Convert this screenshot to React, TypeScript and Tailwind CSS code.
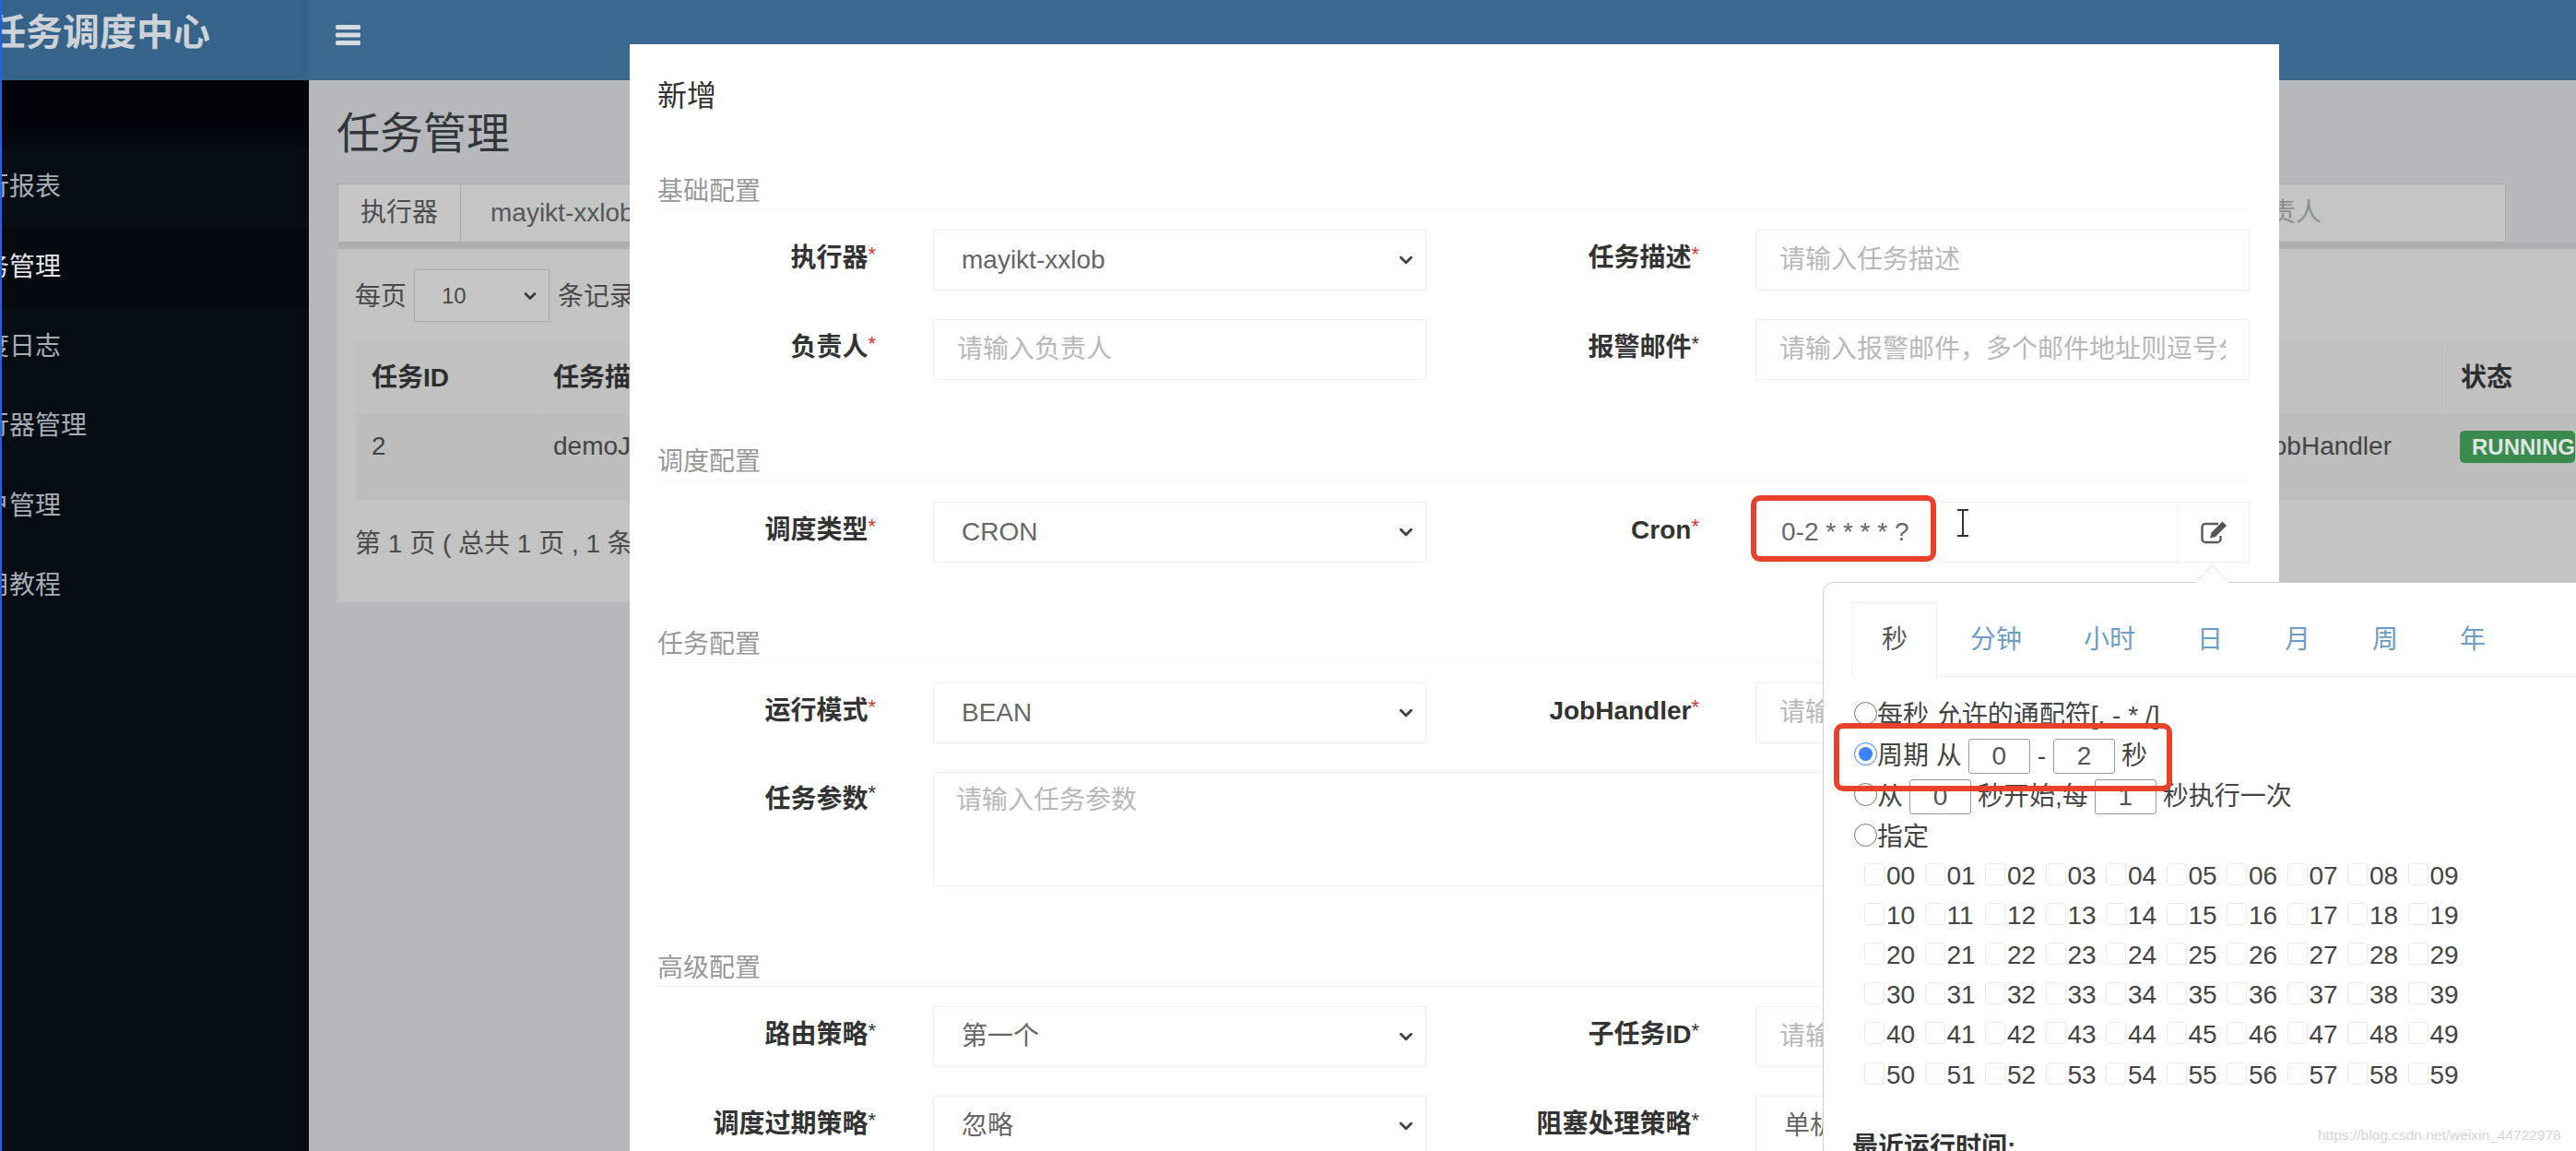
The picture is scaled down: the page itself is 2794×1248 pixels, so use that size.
import React from "react";
import { ChevronDown } from "lucide-react";

const menu = [
  { label: "运行报表" },
  { label: "任务管理", active: true },
  { label: "调度日志" },
  { label: "执行器管理" },
  { label: "用户管理" },
  { label: "使用教程" },
];

const Label = ({ text, red, right }: { text: string; red?: boolean; right?: boolean }) => (
  <div className={`flex items-center justify-end pb-[4px] text-[28px] font-bold text-[#333] ${right ? "pr-[61px]" : "pr-[62px]"}`}>
    {text}
    <span className={`-mt-[10px] text-[22px] font-normal ${red ? "text-[#d9362c]" : "text-[#333]"}`}>*</span>
  </div>
);

const SelectBox = ({ value }: { value: string }) => (
  <div className="flex h-full items-center justify-between rounded-[2px] border border-[#eeeeee] pl-[30px] pr-[10px] text-[28px] text-[#666]">
    {value}
    <ChevronDown size={22} strokeWidth={3.2} className="text-[#444]" />
  </div>
);

const TextInput = ({ placeholder }: { placeholder: string }) => (
  <input
    placeholder={placeholder}
    className="h-full w-full rounded-[2px] border border-[#eeeeee] px-[25px] text-[28px] text-[#666] outline-none placeholder:text-[#b8b8b8]"
  />
);

const Legend = ({ text, className }: { text: string; className: string }) => (
  <div className={`flex h-[42px] items-center border-b border-[#f5f5f5] pt-[3px] text-[28px] text-[#999] ${className}`}>{text}</div>
);

const Row = ({ children, className }: { children: React.ReactNode; className: string }) => (
  <div className={`grid h-[66px] grid-cols-[299px_535px_357px_536px] ${className}`}>{children}</div>
);

const SmallInput = ({ value }: { value: string }) => (
  <input
    defaultValue={value}
    className="h-[38px] w-[67px] rounded-[3px] border border-[#9a9a9a] text-center text-[28px] text-[#555] outline-none"
  />
);

const Radio = ({ checked }: { checked?: boolean }) => (
  <input type="radio" name="second" defaultChecked={checked} className="m-0 mb-[6px] h-[25px] w-[25px] accent-[#3b82f6]" />
);

const tabs = ["秒", "分钟", "小时", "日", "月", "周", "年"];
const seconds = Array.from({ length: 60 }, (_, i) => String(i).padStart(2, "0"));

export default function App() {
  return (
    <div className="relative flex h-[1248px] w-[2794px] overflow-hidden bg-[#b6b8bc] [font-family:'Liberation_Sans','Noto_Sans_CJK_SC',sans-serif]">
      <aside className="flex w-[335px] shrink-0 flex-col overflow-hidden border-l-2 border-[#2460e0] bg-[#070d15]">
        <div className="flex h-[87px] shrink-0 items-center whitespace-nowrap bg-[#36638a] pb-[17px] text-[40px] font-bold text-[#cdd2d7]">
          <span className="-ml-[14px]">任务调度中心</span>
        </div>
        <div className="h-[73px] shrink-0 bg-gradient-to-b from-[#010308] from-60% to-[#060c14]" />
        {menu.map((item) => (
          <div
            key={item.label}
            className={`flex h-[86.4px] shrink-0 items-center whitespace-nowrap text-[28px] ${item.active ? "bg-[#050a11] text-[#e4e6e8]" : "text-[#a7adb3]"}`}
          >
            <span className="-ml-[48px]">{item.label}</span>
          </div>
        ))}
      </aside>

      <main className="min-w-0 flex-1">
        <header className="flex h-[87px] items-center bg-[#3c698f] pb-[12px] pl-[29px]">
          <svg width="27" height="22" viewBox="0 0 27 22" fill="#d5dbe1">
            <rect width="27" height="5" rx="1.5" />
            <rect y="8.5" width="27" height="5" rx="1.5" />
            <rect y="17" width="27" height="5" rx="1.5" />
          </svg>
        </header>
        <div className="pl-[31px]">
          <h1 className="mt-[30px] mb-[26px] h-[56px] -translate-x-px text-[47px] leading-[56px] font-normal text-[#33373b]">任务管理</h1>
          <div className="flex h-[64px] w-[2352px] text-[28px] text-[#55585a]">
            <div className="flex w-[134px] items-center justify-center border border-[#a9abad] bg-[#c6c6c6] text-[#4c4c4c]">执行器</div>
            <div className="flex flex-1 items-center border-y border-r border-[#a9abad] bg-[#c4c5c5] pl-[32px]">mayikt-xxlob</div>
            <div className="flex w-[300px] items-center border-y border-r border-[#a9abad] bg-[#c4c5c5] pl-[16px] text-[#8d8f91]">负责人</div>
          </div>
          <section className="h-[390px] border-t-[7px] border-[#adaeb0] bg-[#c3c3c3] pl-[19px]">
            <div className="flex h-[100px] items-start pt-[22px] text-[28px] text-[#4a4a4a]">
              <span className="mt-[9px]">每页</span>
              <div className="ml-[8px] flex h-[57px] w-[147px] items-center justify-between border border-[#a9a9a9] bg-[#c6c6c6] pl-[29px] pr-[10px] text-[24px]">
                10
                <ChevronDown size={20} strokeWidth={3.2} className="text-[#3a3a3a]" />
              </div>
              <span className="ml-[9px] mt-[9px]">条记录</span>
            </div>
            <div className="flex h-[79px] items-center bg-[#c1c1c1] text-[28px] font-bold text-[#2c2e30]">
              <div className="flex h-full w-[197px] items-center border-r border-[#c9c9c9] pl-[18px]">任务ID</div>
              <div className="flex h-full flex-1 items-center pl-[18px]">任务描述</div>
              <div className="flex h-full w-[143px] items-center border-l border-[#c9c9c9] pl-[17px]">状态</div>
            </div>
            <div className="flex h-[93px] bg-[#bdbdbd] pt-[14px] text-[28px] text-[#424446]">
              <div className="w-[197px] pl-[18px]">2</div>
              <div className="flex-1 pl-[18px]">demoJobHandler</div>
              <div className="whitespace-nowrap pr-[57px]">BEAN：demoJobHandler</div>
              <div className="w-[143px] pl-[17px]">
                <span className="inline-block h-[35px] whitespace-nowrap rounded-[5px] bg-[#3a8a4f] pl-[13px] text-[24px] leading-[35px] font-bold text-[#dfe5e0]">RUNNING</span>
              </div>
            </div>
            <div className="mt-[31px] text-[28px] leading-[34px] text-[#4a4a4a]">第 1 页 ( 总共 1 页 , 1 条记录 )</div>
          </section>
        </div>
      </main>

      {/* modal */}
      <div className="absolute top-[48px] bottom-0 left-[683px] w-[1789px] overflow-hidden bg-white pl-[30px]">
        <div className="mt-[36px] h-[40px] text-[32px] leading-[40px] text-[#333]">新增</div>
        <div className="w-[1727px]">
          <Legend text="基础配置" className="mt-[62px]" />
          <Row className="mt-[21px]">
            <Label text="执行器" red />
            <SelectBox value="mayikt-xxlob" />
            <Label text="任务描述" red right />
            <TextInput placeholder="请输入任务描述" />
          </Row>
          <Row className="mt-[31px]">
            <Label text="负责人" red />
            <TextInput placeholder="请输入负责人" />
            <Label text="报警邮件" right />
            <TextInput placeholder="请输入报警邮件，多个邮件地址则逗号分隔" />
          </Row>

          <Legend text="调度配置" className="mt-[67px]" />
          <Row className="mt-[23px]">
            <Label text="调度类型" red />
            <SelectBox value="CRON" />
            <Label text="Cron" red right />
            <div className="flex h-full">
              <input
                defaultValue="0-2 * * * * ?"
                className="h-full w-[458px] border border-[#eeeeee] px-[27px] text-[28px] text-[#666] outline-none"
              />
              <div className="flex flex-1 items-center justify-center border-y border-r border-[#eeeeee]">
                <svg width="30" height="26" viewBox="0 0 30 26" fill="none">
                  <path d="M20 4H6a3.5 3.5 0 0 0-3.5 3.5v13A3.5 3.5 0 0 0 6 24h13a3.5 3.5 0 0 0 3.5-3.5V17" stroke="#5a5a5a" strokeWidth="2.4" />
                  <path d="M24.5 1.5 29 6 17 18l-6 1.5L12.500 13.500Z" fill="#555" />
                </svg>
              </div>
            </div>
          </Row>

          <Legend text="任务配置" className="mt-[67px]" />
          <Row className="mt-[21px]">
            <Label text="运行模式" red />
            <SelectBox value="BEAN" />
            <Label text="JobHandler" red right />
            <TextInput placeholder="请输入JobHandler" />
          </Row>
          <div className="mt-[31px] grid h-[124px] grid-cols-[299px_1428px]">
            <div className="flex justify-end pr-[62px] pt-[9px] text-[28px] font-bold text-[#333]">
              任务参数<span className="-mt-[3px] text-[22px] font-normal">*</span>
            </div>
            <textarea
              placeholder="请输入任务参数"
              className="h-full w-full resize-none rounded-[2px] border border-[#eeeeee] px-[24px] py-[9px] text-[28px] outline-none placeholder:text-[#b8b8b8]"
            />
          </div>

          <Legend text="高级配置" className="mt-[67px]" />
          <Row className="mt-[21px]">
            <Label text="路由策略" />
            <SelectBox value="第一个" />
            <Label text="子任务ID" right />
            <TextInput placeholder="请输入子任务ID" />
          </Row>
          <Row className="mt-[31px]">
            <Label text="调度过期策略" />
            <SelectBox value="忽略" />
            <Label text="阻塞处理策略" right />
            <SelectBox value="单机串行" />
          </Row>
        </div>
      </div>

      {/* cron popover */}
      <div className="absolute top-[631px] left-[1977px] h-[640px] w-[840px] rounded-tl-[12px] border border-[#cfcfcf] bg-white pt-[21px] text-[28px] text-[#444]">
        <div className="absolute -top-[14px] left-[408px] h-[27px] w-[27px] rotate-45 border-t border-l border-[#e2e2e2] bg-white" />
        <div className="ml-[31px] flex h-[81px] border-b border-[#eeeeee] text-[#6d9cc6]">
          {tabs.map((tab, i) => (
            <div
              key={tab}
              className={`mr-[5px] flex h-[81px] items-center px-[31px] ${i === 0 ? "border-x border-t border-[#eeeeee] bg-white text-[#555]" : ""}`}
            >
              {tab}
            </div>
          ))}
        </div>
        <div className="mt-[20px] pl-[33px]">
          <div className="flex h-[44px] items-center">
            <Radio />
            每秒 允许的通配符[, - * /]
          </div>
          <div className="flex h-[44px] items-center gap-[7px]">
            <span className="flex items-center">
              <Radio checked />
              周期 从
            </span>
            <SmallInput value="0" />
            <span className="mx-[1px]">-</span>
            <SmallInput value="2" />
            秒
          </div>
          <div className="flex h-[44px] items-center gap-[7px]">
            <span className="flex items-center">
              <Radio />从
            </span>
            <SmallInput value="0" />
            秒开始,每
            <SmallInput value="1" />
            秒执行一次
          </div>
          <div className="flex h-[44px] items-center">
            <Radio />
            指定
          </div>
          <div className="ml-[11px] -mt-[2px] grid grid-cols-[repeat(10,65.5px)] auto-rows-[43.2px]">
            {seconds.map((s) => (
              <label key={s} className="flex items-center">
                <input type="checkbox" className="mb-[4px] h-[24px] w-[22px] appearance-none rounded-[4px] border border-[#eaeaea]" />
                <span className="ml-[2px] text-[#444]">{s}</span>
              </label>
            ))}
          </div>
          <div className="-ml-[2px] mt-[36px] font-bold text-[#333]">最近运行时间:</div>
        </div>
      </div>

      {/* annotations */}
      <div className="absolute top-[537px] left-[1899px] h-[72px] w-[201px] rounded-[10px] border-[6px] border-[#e8432a]" />
      <div className="absolute top-[784px] left-[1989px] h-[74px] w-[367px] rounded-[10px] border-[6px] border-[#e8432a]" />
      <svg className="absolute top-[552px] left-[2121px]" width="16" height="30" viewBox="0 0 16 30" fill="none" stroke="#333" strokeWidth="2">
        <path d="M2 1h12M8 1v28M2 29h12" />
      </svg>
      <div className="absolute top-[1221px] left-[2514px] text-[15.500px] leading-[20px] whitespace-nowrap text-[#d4d4d4]">https://blog.csdn.net/weixin_44722978</div>
    </div>
  );
}
